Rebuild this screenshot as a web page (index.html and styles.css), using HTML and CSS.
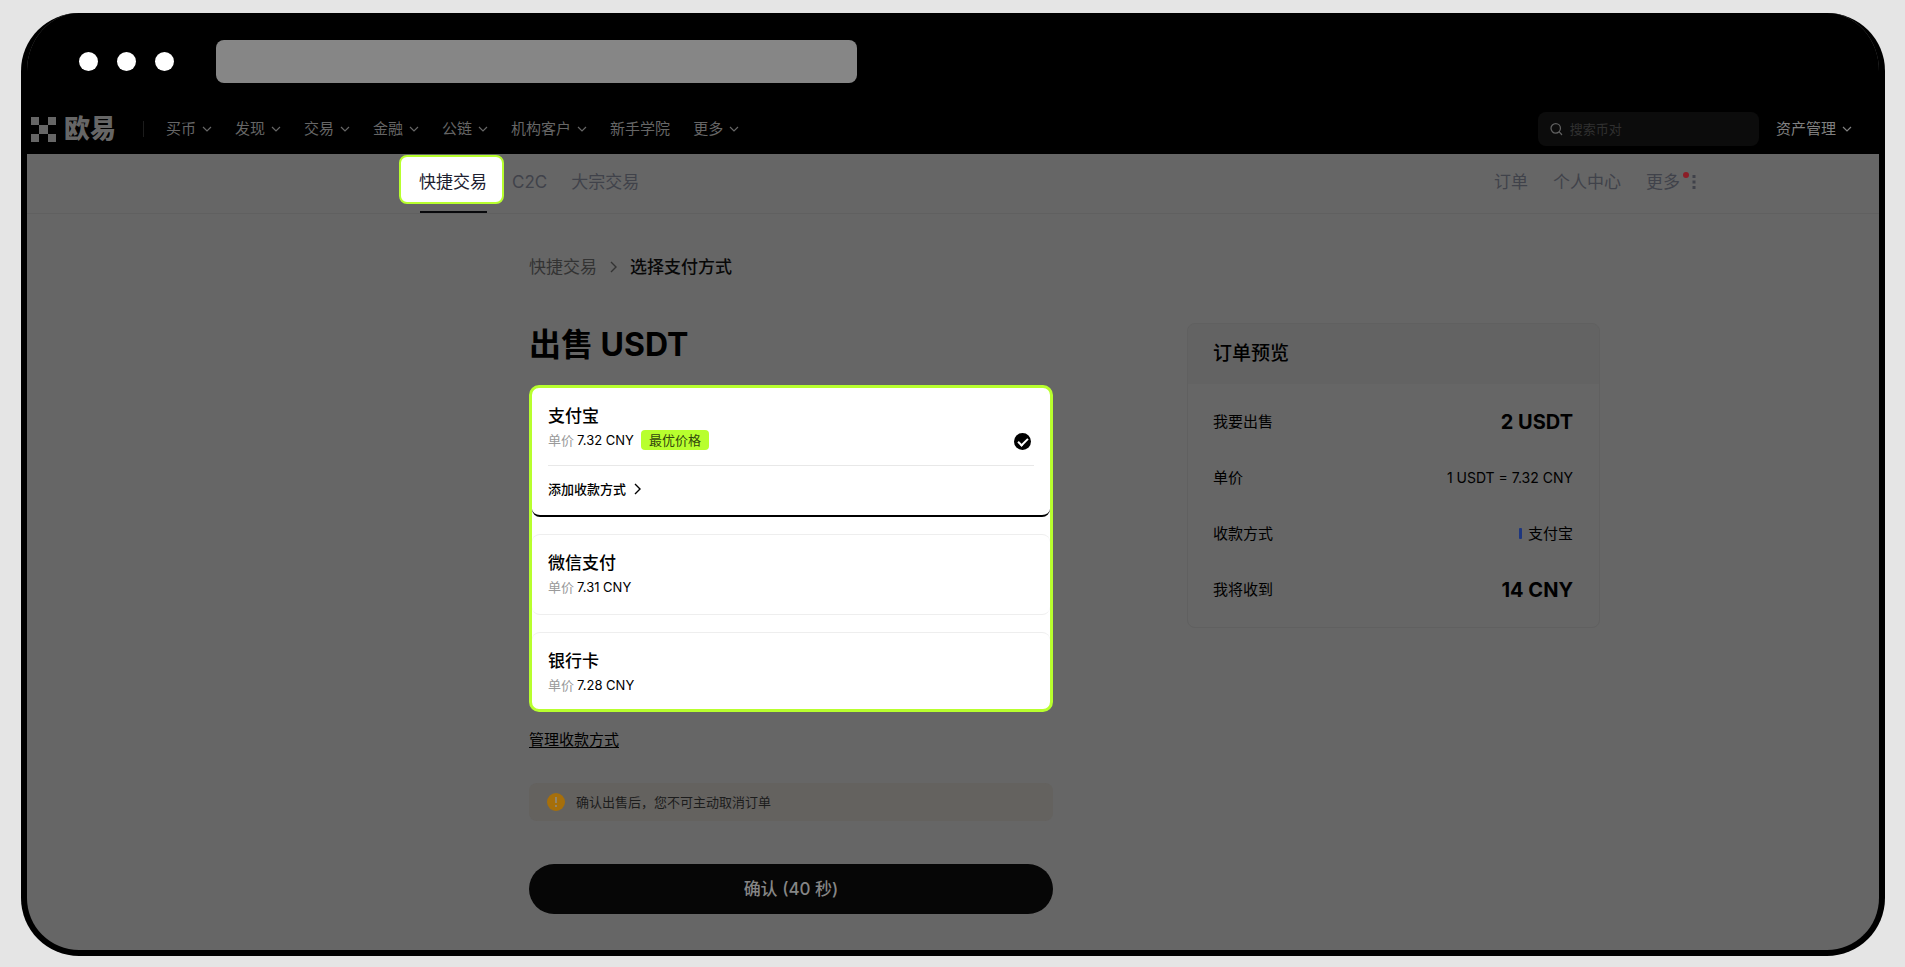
FILE: index.html
```html
<!DOCTYPE html>
<html lang="zh-CN">
<head>
    <meta charset="UTF-8">
    <meta name="viewport" content="width=device-width, initial-scale=1.0">
    <title>出售 USDT</title>

    <link rel="stylesheet" href="styles.css">
</head>
<body>
    <div class="window">
        <!-- Window title bar -->
        <div class="title-bar">
            <span class="dot"></span>
            <span class="dot"></span>
            <span class="dot"></span>
            <div class="address"></div>
        </div>

        <!-- Main navigation -->
        <header class="header">
            <a class="logo" href="#">
                <svg width="25" height="25" viewBox="0 0 25 25" fill="currentColor"><path d="M0 0h8v8H0zM17 0h8v8h-8zM8 8h9v9H8zM0 17h8v8H0zM17 17h8v8h-8z"/></svg>
                <span>欧易</span>
            </a>
            <nav class="nav">
                <a href="#">买币<svg class="arrow" viewBox="0 0 10 6"><path d="M1 1l4 4 4-4"/></svg></a>
                <a href="#">发现<svg class="arrow" viewBox="0 0 10 6"><path d="M1 1l4 4 4-4"/></svg></a>
                <a href="#">交易<svg class="arrow" viewBox="0 0 10 6"><path d="M1 1l4 4 4-4"/></svg></a>
                <a href="#">金融<svg class="arrow" viewBox="0 0 10 6"><path d="M1 1l4 4 4-4"/></svg></a>
                <a href="#">公链<svg class="arrow" viewBox="0 0 10 6"><path d="M1 1l4 4 4-4"/></svg></a>
                <a href="#">机构客户<svg class="arrow" viewBox="0 0 10 6"><path d="M1 1l4 4 4-4"/></svg></a>
                <a href="#">新手学院</a>
                <a href="#">更多<svg class="arrow" viewBox="0 0 10 6"><path d="M1 1l4 4 4-4"/></svg></a>
            </nav>
            <label class="search">
                <svg width="14" height="14" viewBox="0 0 14 14" fill="none" stroke="currentColor" stroke-width="1.4" stroke-linecap="round"><circle cx="6.3" cy="6.3" r="5.2"/><path d="M10.2 10.2l2.6 2.8"/></svg>
                <input type="text" placeholder="搜索币对" aria-label="搜索币对">
            </label>
            <a class="assets" href="#">资产管理<svg class="arrow" viewBox="0 0 10 6"><path d="M1 1l4 4 4-4"/></svg></a>
        </header>

        <!-- Trade tabs -->
        <div class="sub-header">
            <nav class="tabs">
                <a class="active" href="#">快捷交易</a>
                <a href="#">C2C</a>
                <a href="#">大宗交易</a>
            </nav>
            <nav class="user-links">
                <a href="#">订单</a>
                <a href="#">个人中心</a>
                <a class="more" href="#">更多<svg width="4" height="14" viewBox="0 0 4 14" fill="currentColor"><path d="M.5 0h3v3h-3zM.5 5.5h3v3h-3zM.5 11h3v3h-3z"/></svg></a>
            </nav>
        </div>

        <main class="content">
            <nav class="breadcrumb">
                <a href="#">快捷交易</a>
                <svg width="7" height="12" viewBox="0 0 7 12"><path d="M1 1l5 5-5 5"/></svg>
                <span>选择支付方式</span>
            </nav>

            <div class="columns">
                <form class="sell-form">
                    <h1>出售 USDT</h1>

                    <div class="payments">
                        <div class="payment selected">
                            <label class="payment-option" for="alipay">
                                <span class="name">支付宝</span>
                                <span class="price"><i>单价</i> 7.32 CNY <b class="badge">最优价格</b></span>
                            </label>
                            <input type="radio" id="alipay" name="payment" checked>
                            <a class="add-account" href="#">添加收款方式<svg width="7" height="12" viewBox="0 0 7 12"><path d="M1 1l5 5-5 5"/></svg></a>
                        </div>
                        <div class="payment">
                            <label class="payment-option" for="wechat">
                                <span class="name">微信支付</span>
                                <span class="price"><i>单价</i> 7.31 CNY</span>
                            </label>
                            <input type="radio" id="wechat" name="payment">
                        </div>
                        <div class="payment">
                            <label class="payment-option" for="bank">
                                <span class="name">银行卡</span>
                                <span class="price"><i>单价</i> 7.28 CNY</span>
                            </label>
                            <input type="radio" id="bank" name="payment">
                        </div>
                    </div>

                    <a class="manage" href="#">管理收款方式</a>

                    <div class="notice">
                        <svg width="18" height="18" viewBox="0 0 18 18"><circle cx="9" cy="9" r="9" fill="#a66f0b"/><path d="M9 4v6M9 12v2" stroke="#8f8a80" stroke-width="1.6"/></svg>
                        <span>确认出售后，您不可主动取消订单</span>
                    </div>

                    <button type="submit" class="confirm">确认 (40 秒)</button>
                </form>

                <!-- Order summary -->
                <aside class="order">
                    <h2>订单预览</h2>
                    <dl>
                        <div class="row">
                            <dt>我要出售</dt>
                            <dd class="amount">2 USDT</dd>
                        </div>
                        <div class="row">
                            <dt>单价</dt>
                            <dd class="rate">1 USDT = 7.32 CNY</dd>
                        </div>
                        <div class="row">
                            <dt>收款方式</dt>
                            <dd class="method">支付宝</dd>
                        </div>
                        <div class="row">
                            <dt>我将收到</dt>
                            <dd class="amount">14 CNY</dd>
                        </div>
                    </dl>
                </aside>
            </div>
        </main>
    </div>
</body>
</html>
```
FILE: styles.css
```css
* {
    box-sizing: border-box;
}

body {
    display: flex;
    min-height: 100vh;
    margin: 0;
    padding: 13px 20px 11px 21px;
    background: #e5e5e5;
    color: #000;
    font-family: Inter, "Noto Sans CJK SC", sans-serif;
    font-size: 15px;
    line-height: 20px;
}

a {
    color: inherit;
    text-decoration: none;
}

.window {
    flex: 1;
    min-width: 0;
    border: 6px solid #000;
    border-top: 0;
    border-radius: 58px;
    background: #666;
    overflow: hidden;
}

/* window title bar */
.title-bar {
    display: flex;
    align-items: center;
    gap: 19px;
    height: 96px;
    padding: 0 52px;
    background: #000;
}

.dot {
    width: 19px;
    height: 19px;
    border-radius: 50%;
    background: #fff;
}

.address {
    width: 40%;
    max-width: 641px;
    height: 43px;
    margin-left: 23px;
    border-radius: 8px;
    background: #868686;
}

/* main navigation */
.header {
    display: flex;
    align-items: center;
    height: 45px;
    padding: 0 27px 5px 4px;
    background: #000;
    color: #666;
}

.logo {
    display: flex;
    align-items: center;
    gap: 8px;
    padding-right: 27px;
    color: #666;
    font-size: 26px;
    font-weight: 900;
}

.nav {
    display: flex;
    align-items: center;
    gap: 23px;
    padding-left: 22px;
    border-left: 1px solid #1c1c1c;
    line-height: 16px;
}

.nav a,
.assets {
    display: flex;
    align-items: center;
    gap: 6px;
    white-space: nowrap;
}

.arrow {
    width: 10px;
    height: 6px;
    fill: none;
    stroke: currentColor;
    stroke-width: 1.2;
}

.search {
    display: flex;
    align-items: center;
    gap: 5px;
    width: 221px;
    height: 34px;
    margin-left: auto;
    padding: 0 12px;
    border-radius: 8px;
    background: #0c0c0c;
    color: #606060;
}

.search input {
    width: 100%;
    border: 0;
    outline: 0;
    background: none;
    color: #666;
    font: inherit;
    font-size: 13px;
}

.search input::placeholder {
    color: #303030;
}

.assets {
    margin-left: 17px;
    color: #808080;
}

/* trade tabs */
.sub-header {
    display: flex;
    justify-content: space-between;
    height: 60px;
    padding: 1px 183px 0 372px;
    border-bottom: 1px solid #606060;
    color: #40424a;
    font-size: 17px;
}

.tabs,
.user-links {
    display: flex;
    align-items: center;
    gap: 25px;
    height: 54px;
}

.tabs {
    align-items: flex-start;
    gap: 24px;
    line-height: 54px;
}

.tabs .active {
    position: relative;
    height: 49px;
    margin-right: -16px;
    padding: 0 15px 0 18px;
    border: 2px solid #b8ff2e;
    border-radius: 8px;
    background: #fff;
    color: #1d2030;
    line-height: 50px;
}

.tabs .active::after {
    content: "";
    position: absolute;
    left: 19px;
    bottom: -11px;
    width: 67px;
    height: 2px;
    background: #08090c;
}

.more {
    position: relative;
    display: flex;
    align-items: center;
    gap: 12px;
}

.more::after {
    content: "";
    position: absolute;
    top: 0;
    right: 7px;
    width: 6px;
    height: 6px;
    border-radius: 50%;
    background: #8c1d27;
}

/* page content */
.content {
    padding: 43px 279px 36px 502px;
}

.breadcrumb {
    display: flex;
    align-items: center;
    gap: 13px;
    color: #333;
    font-size: 17px;
}

.breadcrumb svg,
.add-account svg {
    fill: none;
    stroke: currentColor;
    stroke-width: 1.4;
}

.breadcrumb span {
    color: #080808;
    font-weight: 500;
}

.columns {
    display: grid;
    grid-template-columns: minmax(0, 524fr) minmax(0, 413fr);
    gap: 134px;
    align-items: start;
    margin-top: 46px;
}

.sell-form h1 {
    margin: 2px 0 20px;
    font-size: 32px;
    font-weight: 700;
    line-height: 40px;
}

.payments {
    display: flex;
    flex-direction: column;
    gap: 17px;
    border: 3px solid #b8ff2e;
    border-radius: 10px;
    background: #fff;
}

.payment {
    display: flex;
    flex-wrap: wrap;
    align-items: center;
    justify-content: space-between;
    padding: 16px 16px 17px;
    border: 1px solid #eee;
    border-width: 1px 0;
    border-radius: 8px;
}

.payment:last-child {
    padding-bottom: 14px;
    border-bottom: 0;
}

.payment.selected {
    padding-bottom: 16px;
    border: 0;
    border-bottom: 2px solid #000;
}

.payment-option {
    display: flex;
    flex-direction: column;
    gap: 2px;
}

.name {
    font-size: 17px;
    font-weight: 500;
    line-height: 24px;
}

.price {
    display: flex;
    align-items: center;
    gap: 3px;
    font-size: 13px;
}

.price i {
    color: #9a9a9a;
    font-style: normal;
}

.badge {
    margin-left: 4px;
    padding: 0 8px;
    border-radius: 4px;
    background: #b8ff2e;
    color: #33470d;
    font-weight: 400;
}

.payment input {
    appearance: none;
    align-self: flex-end;
    display: grid;
    place-items: center;
    width: 17px;
    height: 17px;
    margin: 0 3px 0 0;
    border-radius: 50%;
}

.payment input:checked {
    background: #000;
}

.payment input:checked::after {
    content: "";
    width: 8px;
    height: 4px;
    margin-bottom: 2px;
    border: solid #fff;
    border-width: 0 0 2px 2px;
    transform: rotate(-45deg);
}

.add-account {
    display: flex;
    align-items: center;
    gap: 8px;
    width: 100%;
    margin-top: 15px;
    padding-top: 13px;
    border-top: 1px solid #e8e8e8;
    font-size: 13px;
    font-weight: 500;
}

.manage {
    display: inline-block;
    margin-top: 18px;
    text-decoration: underline;
    text-underline-offset: 2px;
}

.notice {
    display: flex;
    align-items: center;
    gap: 11px;
    margin-top: 33px;
    padding: 9px 18px;
    border-radius: 8px;
    background: #64625f;
    color: #1c1c1c;
    font-size: 13px;
}

.confirm {
    width: 100%;
    height: 50px;
    margin-top: 43px;
    border: 0;
    border-radius: 25px;
    background: #060606;
    color: #858585;
    font: inherit;
    font-size: 17px;
    font-weight: 500;
    cursor: pointer;
}

/* order summary */
.order {
    border: 1px solid #606060;
    border-radius: 8px;
    overflow: hidden;
}

.order h2 {
    margin: 0;
    padding: 0 25px;
    background: #636363;
    font-size: 19px;
    font-weight: 500;
    line-height: 60px;
}

.order dl {
    display: flex;
    flex-direction: column;
    gap: 36px;
    margin: 0;
    padding: 28px 26px 27px 25px;
}

.row {
    display: flex;
    align-items: center;
    justify-content: space-between;
}

.row dd {
    margin: 0;
}

.row .amount {
    font-size: 20px;
    font-weight: 700;
}

.row .rate {
    font-size: 14px;
}

.method::before {
    content: "";
    display: inline-block;
    width: 3px;
    height: 11px;
    margin-right: 6px;
    border-radius: 1px;
    background: #1d367f;
}
```
